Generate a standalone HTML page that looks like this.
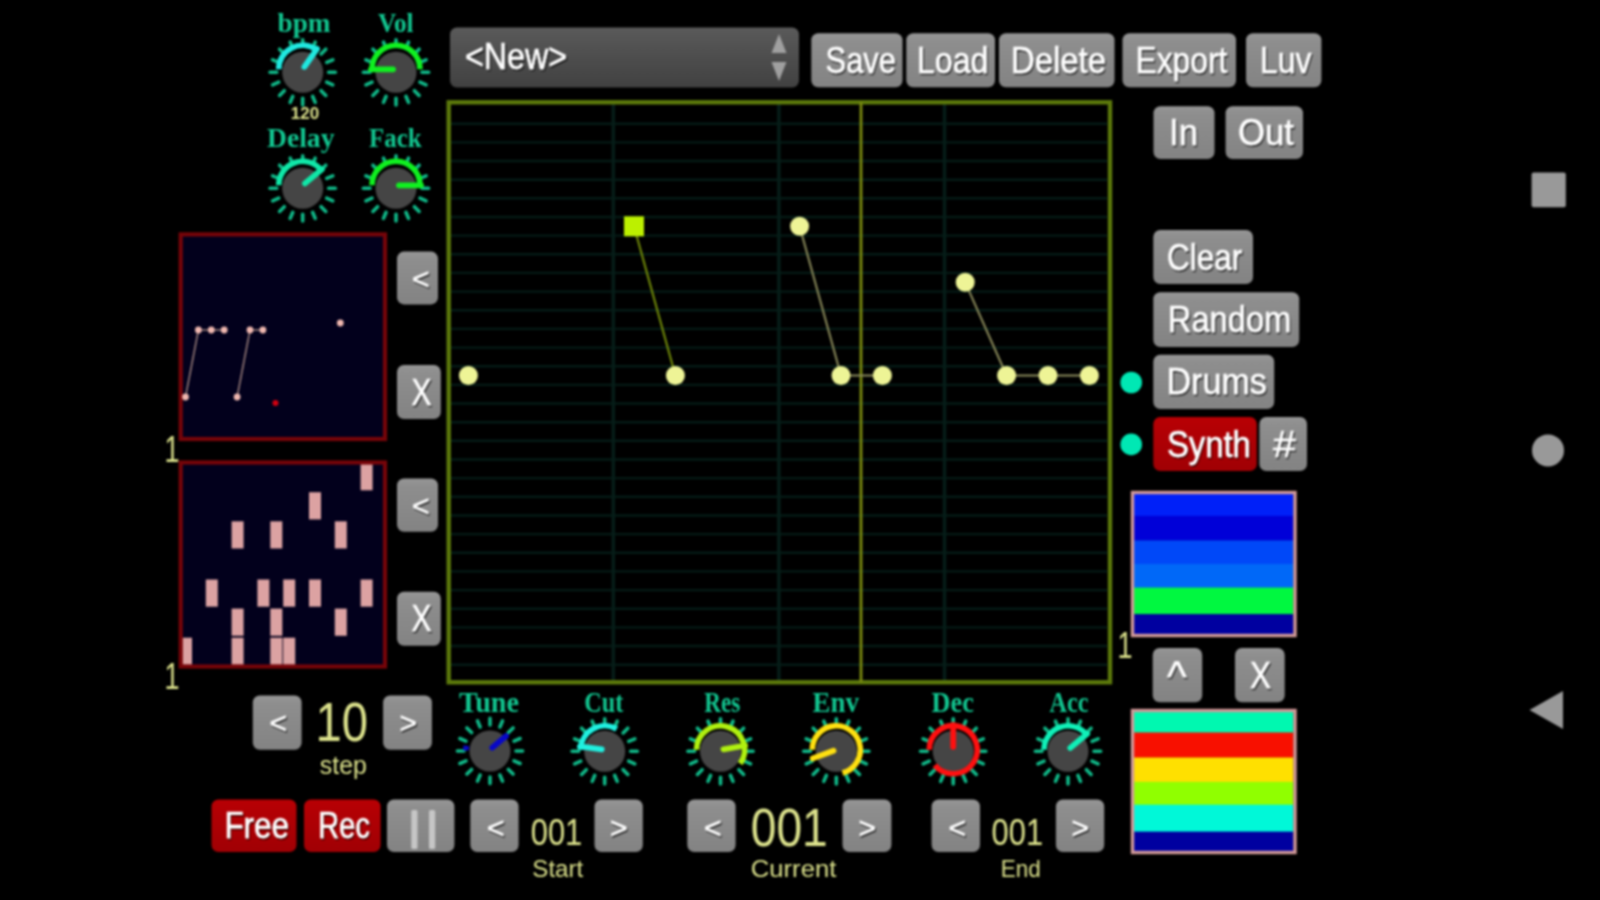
<!DOCTYPE html>
<html><head><meta charset="utf-8"><title>Synth</title>
<style>html,body{margin:0;padding:0;background:#000;width:1600px;height:900px;overflow:hidden}svg{display:block;filter:blur(1.1px)}</style>
</head><body>
<svg width="1600" height="900" viewBox="0 0 1600 900">
<defs>
<linearGradient id="gb" x1="0" y1="0" x2="0" y2="1"><stop offset="0" stop-color="#969696"/><stop offset="0.15" stop-color="#8e8e8e"/><stop offset="1" stop-color="#838383"/></linearGradient>
<linearGradient id="gr" x1="0" y1="0" x2="0" y2="1"><stop offset="0" stop-color="#b80004"/><stop offset="1" stop-color="#a00004"/></linearGradient>
<linearGradient id="gd" x1="0" y1="0" x2="0" y2="1"><stop offset="0" stop-color="#5a5a5a"/><stop offset="1" stop-color="#414141"/></linearGradient>
<filter id="shg" x="-20%" y="-20%" width="140%" height="150%"><feDropShadow dx="1.2" dy="1.8" stdDeviation="0.7" flood-color="#2c2c2c" flood-opacity="0.9"/></filter>
<filter id="shr" x="-20%" y="-20%" width="140%" height="150%"><feDropShadow dx="1.2" dy="1.8" stdDeviation="0.7" flood-color="#480000" flood-opacity="0.9"/></filter>
<filter id="shd" x="-20%" y="-20%" width="140%" height="150%"><feDropShadow dx="1.5" dy="2" stdDeviation="0.6" flood-color="#1c1c1c" flood-opacity="0.9"/></filter>
</defs>
<rect width="1600" height="900" fill="#000"/>

<rect x="450" y="27.5" width="349" height="60" rx="7" fill="url(#gd)"/>
<text x="465.0" y="68.5" font-size="36" font-family="Liberation Sans, sans-serif" text-anchor="start" fill="#fff" textLength="102.0" lengthAdjust="spacingAndGlyphs" stroke="#fff" stroke-width="0.4" filter="url(#shd)">&lt;New&gt;</text>
<path d="M779,34 L786.5,53 L771.5,53 Z" fill="#a0a0a0"/><path d="M771.5,62 L786.5,62 L779,81 Z" fill="#a0a0a0"/>
<rect x="811.3" y="33.3" width="91.2" height="54.0" rx="7" fill="url(#gb)"/>
<text x="825.6" y="72.8" font-size="36" font-family="Liberation Sans, sans-serif" text-anchor="start" fill="#fff" textLength="70.4" lengthAdjust="spacingAndGlyphs" stroke="#fff" stroke-width="0.5" filter="url(#shg)">Save</text>
<rect x="906.3" y="33.3" width="88.7" height="54.0" rx="7" fill="url(#gb)"/>
<text x="917.0" y="72.8" font-size="36" font-family="Liberation Sans, sans-serif" text-anchor="start" fill="#fff" textLength="71.5" lengthAdjust="spacingAndGlyphs" stroke="#fff" stroke-width="0.5" filter="url(#shg)">Load</text>
<rect x="999.0" y="33.3" width="115.5" height="54.0" rx="7" fill="url(#gb)"/>
<text x="1011.0" y="72.8" font-size="36" font-family="Liberation Sans, sans-serif" text-anchor="start" fill="#fff" textLength="95.0" lengthAdjust="spacingAndGlyphs" stroke="#fff" stroke-width="0.5" filter="url(#shg)">Delete</text>
<rect x="1122.5" y="33.3" width="113.5" height="54.0" rx="7" fill="url(#gb)"/>
<text x="1135.5" y="72.8" font-size="36" font-family="Liberation Sans, sans-serif" text-anchor="start" fill="#fff" textLength="91.9" lengthAdjust="spacingAndGlyphs" stroke="#fff" stroke-width="0.5" filter="url(#shg)">Export</text>
<rect x="1246.0" y="33.3" width="75.4" height="54.0" rx="7" fill="url(#gb)"/>
<text x="1260.0" y="72.8" font-size="36" font-family="Liberation Sans, sans-serif" text-anchor="start" fill="#fff" textLength="51.5" lengthAdjust="spacingAndGlyphs" stroke="#fff" stroke-width="0.5" filter="url(#shg)">Luv</text>
<rect x="1153.5" y="106.3" width="61.0" height="52.7" rx="7" fill="url(#gb)"/>
<text x="1169.0" y="145.2" font-size="36" font-family="Liberation Sans, sans-serif" text-anchor="start" fill="#fff" textLength="29.0" lengthAdjust="spacingAndGlyphs" stroke="#fff" stroke-width="0.5" filter="url(#shg)">In</text>
<rect x="1225.6" y="106.3" width="77.4" height="52.7" rx="7" fill="url(#gb)"/>
<text x="1238.0" y="145.2" font-size="36" font-family="Liberation Sans, sans-serif" text-anchor="start" fill="#fff" textLength="56.0" lengthAdjust="spacingAndGlyphs" stroke="#fff" stroke-width="0.5" filter="url(#shg)">Out</text>
<rect x="1153.3" y="230.0" width="99.7" height="54.0" rx="7" fill="url(#gb)"/>
<text x="1167.0" y="269.5" font-size="36" font-family="Liberation Sans, sans-serif" text-anchor="start" fill="#fff" textLength="75.2" lengthAdjust="spacingAndGlyphs" stroke="#fff" stroke-width="0.5" filter="url(#shg)">Clear</text>
<rect x="1153.3" y="292.3" width="145.9" height="54.7" rx="7" fill="url(#gb)"/>
<text x="1167.8" y="332.1" font-size="36" font-family="Liberation Sans, sans-serif" text-anchor="start" fill="#fff" textLength="123.5" lengthAdjust="spacingAndGlyphs" stroke="#fff" stroke-width="0.5" filter="url(#shg)">Random</text>
<rect x="1153.3" y="354.7" width="120.9" height="54.3" rx="7" fill="url(#gb)"/>
<text x="1166.5" y="394.4" font-size="36" font-family="Liberation Sans, sans-serif" text-anchor="start" fill="#fff" textLength="100.3" lengthAdjust="spacingAndGlyphs" stroke="#fff" stroke-width="0.5" filter="url(#shg)">Drums</text>
<rect x="1153.3" y="417.0" width="103.5" height="54.0" rx="7" fill="url(#gr)"/>
<text x="1167.0" y="456.5" font-size="36" font-family="Liberation Sans, sans-serif" text-anchor="start" fill="#fff" textLength="83.8" lengthAdjust="spacingAndGlyphs" stroke="#fff" stroke-width="0.5" filter="url(#shr)">Synth</text>
<rect x="1259.4" y="417.0" width="47.6" height="54.0" rx="7" fill="url(#gb)"/>
<text x="1273.0" y="456.5" font-size="36" font-family="Liberation Sans, sans-serif" text-anchor="start" fill="#fff" textLength="23.0" lengthAdjust="spacingAndGlyphs" stroke="#fff" stroke-width="0.5" filter="url(#shg)">#</text>
<circle cx="1131.2" cy="382.5" r="10.8" fill="#00e8b4"/>
<circle cx="1131.2" cy="444.4" r="10.8" fill="#00e8b4"/>
<line x1="328.7" y1="72.3" x2="335.3" y2="72.3" stroke="#10b888" stroke-width="3.6" stroke-linecap="round"/>
<line x1="326.7" y1="82.2" x2="332.8" y2="84.8" stroke="#10b888" stroke-width="3.6" stroke-linecap="round"/>
<line x1="321.1" y1="90.7" x2="325.8" y2="95.4" stroke="#10b888" stroke-width="3.6" stroke-linecap="round"/>
<line x1="312.6" y1="96.3" x2="315.2" y2="102.4" stroke="#10b888" stroke-width="3.6" stroke-linecap="round"/>
<line x1="302.7" y1="98.3" x2="302.7" y2="104.9" stroke="#10b888" stroke-width="3.6" stroke-linecap="round"/>
<line x1="292.8" y1="96.3" x2="290.2" y2="102.4" stroke="#10b888" stroke-width="3.6" stroke-linecap="round"/>
<line x1="284.3" y1="90.7" x2="279.6" y2="95.4" stroke="#10b888" stroke-width="3.6" stroke-linecap="round"/>
<line x1="278.7" y1="82.2" x2="272.6" y2="84.8" stroke="#10b888" stroke-width="3.6" stroke-linecap="round"/>
<line x1="276.7" y1="72.3" x2="270.1" y2="72.3" stroke="#10b888" stroke-width="3.6" stroke-linecap="round"/>
<line x1="278.7" y1="62.4" x2="272.6" y2="59.8" stroke="#10b888" stroke-width="3.6" stroke-linecap="round"/>
<line x1="284.3" y1="53.9" x2="279.6" y2="49.2" stroke="#10b888" stroke-width="3.6" stroke-linecap="round"/>
<line x1="292.8" y1="48.3" x2="290.2" y2="42.2" stroke="#10b888" stroke-width="3.6" stroke-linecap="round"/>
<line x1="302.7" y1="46.3" x2="302.7" y2="39.7" stroke="#10b888" stroke-width="3.6" stroke-linecap="round"/>
<line x1="312.6" y1="48.3" x2="315.2" y2="42.2" stroke="#10b888" stroke-width="3.6" stroke-linecap="round"/>
<line x1="321.1" y1="53.9" x2="325.8" y2="49.2" stroke="#10b888" stroke-width="3.6" stroke-linecap="round"/>
<line x1="326.7" y1="62.4" x2="332.8" y2="59.8" stroke="#10b888" stroke-width="3.6" stroke-linecap="round"/>
<circle cx="302.7" cy="72.3" r="20.5" fill="#454545"/>
<path d="M278.7,69.3 A24,24 0 0 1 316.5,49.6" fill="none" stroke="#20e8e0" stroke-width="5.6" stroke-linecap="butt"/>
<line x1="304.4" y1="66.8" x2="317.0" y2="48.8" stroke="#20e8e0" stroke-width="5.8" stroke-linecap="round"/>
<text x="277.5" y="31.5" font-size="28" font-family="Liberation Serif, serif" text-anchor="start" fill="#12c690" textLength="53.0" lengthAdjust="spacingAndGlyphs" font-weight="bold">bpm</text>
<line x1="422.0" y1="72.3" x2="428.6" y2="72.3" stroke="#10b888" stroke-width="3.6" stroke-linecap="round"/>
<line x1="420.0" y1="82.2" x2="426.1" y2="84.8" stroke="#10b888" stroke-width="3.6" stroke-linecap="round"/>
<line x1="414.4" y1="90.7" x2="419.1" y2="95.4" stroke="#10b888" stroke-width="3.6" stroke-linecap="round"/>
<line x1="405.9" y1="96.3" x2="408.5" y2="102.4" stroke="#10b888" stroke-width="3.6" stroke-linecap="round"/>
<line x1="396.0" y1="98.3" x2="396.0" y2="104.9" stroke="#10b888" stroke-width="3.6" stroke-linecap="round"/>
<line x1="386.1" y1="96.3" x2="383.5" y2="102.4" stroke="#10b888" stroke-width="3.6" stroke-linecap="round"/>
<line x1="377.6" y1="90.7" x2="372.9" y2="95.4" stroke="#10b888" stroke-width="3.6" stroke-linecap="round"/>
<line x1="372.0" y1="82.2" x2="365.9" y2="84.8" stroke="#10b888" stroke-width="3.6" stroke-linecap="round"/>
<line x1="370.0" y1="72.3" x2="363.4" y2="72.3" stroke="#10b888" stroke-width="3.6" stroke-linecap="round"/>
<line x1="372.0" y1="62.4" x2="365.9" y2="59.8" stroke="#10b888" stroke-width="3.6" stroke-linecap="round"/>
<line x1="377.6" y1="53.9" x2="372.9" y2="49.2" stroke="#10b888" stroke-width="3.6" stroke-linecap="round"/>
<line x1="386.1" y1="48.3" x2="383.5" y2="42.2" stroke="#10b888" stroke-width="3.6" stroke-linecap="round"/>
<line x1="396.0" y1="46.3" x2="396.0" y2="39.7" stroke="#10b888" stroke-width="3.6" stroke-linecap="round"/>
<line x1="405.9" y1="48.3" x2="408.5" y2="42.2" stroke="#10b888" stroke-width="3.6" stroke-linecap="round"/>
<line x1="414.4" y1="53.9" x2="419.1" y2="49.2" stroke="#10b888" stroke-width="3.6" stroke-linecap="round"/>
<line x1="420.0" y1="62.4" x2="426.1" y2="59.8" stroke="#10b888" stroke-width="3.6" stroke-linecap="round"/>
<circle cx="396" cy="72.3" r="20.5" fill="#454545"/>
<path d="M372.0,69.3 A24,24 0 0 1 420.0,69.3" fill="none" stroke="#10f020" stroke-width="5.6" stroke-linecap="butt"/>
<line x1="393.0" y1="69.3" x2="371.0" y2="69.3" stroke="#10f020" stroke-width="5.8" stroke-linecap="round"/>
<text x="378.0" y="31.5" font-size="28" font-family="Liberation Serif, serif" text-anchor="start" fill="#12c690" textLength="35.5" lengthAdjust="spacingAndGlyphs" font-weight="bold">Vol</text>
<line x1="328.7" y1="188.3" x2="335.3" y2="188.3" stroke="#10b888" stroke-width="3.6" stroke-linecap="round"/>
<line x1="326.7" y1="198.2" x2="332.8" y2="200.8" stroke="#10b888" stroke-width="3.6" stroke-linecap="round"/>
<line x1="321.1" y1="206.7" x2="325.8" y2="211.4" stroke="#10b888" stroke-width="3.6" stroke-linecap="round"/>
<line x1="312.6" y1="212.3" x2="315.2" y2="218.4" stroke="#10b888" stroke-width="3.6" stroke-linecap="round"/>
<line x1="302.7" y1="214.3" x2="302.7" y2="220.9" stroke="#10b888" stroke-width="3.6" stroke-linecap="round"/>
<line x1="292.8" y1="212.3" x2="290.2" y2="218.4" stroke="#10b888" stroke-width="3.6" stroke-linecap="round"/>
<line x1="284.3" y1="206.7" x2="279.6" y2="211.4" stroke="#10b888" stroke-width="3.6" stroke-linecap="round"/>
<line x1="278.7" y1="198.2" x2="272.6" y2="200.8" stroke="#10b888" stroke-width="3.6" stroke-linecap="round"/>
<line x1="276.7" y1="188.3" x2="270.1" y2="188.3" stroke="#10b888" stroke-width="3.6" stroke-linecap="round"/>
<line x1="278.7" y1="178.4" x2="272.6" y2="175.8" stroke="#10b888" stroke-width="3.6" stroke-linecap="round"/>
<line x1="284.3" y1="169.9" x2="279.6" y2="165.2" stroke="#10b888" stroke-width="3.6" stroke-linecap="round"/>
<line x1="292.8" y1="164.3" x2="290.2" y2="158.2" stroke="#10b888" stroke-width="3.6" stroke-linecap="round"/>
<line x1="302.7" y1="162.3" x2="302.7" y2="155.7" stroke="#10b888" stroke-width="3.6" stroke-linecap="round"/>
<line x1="312.6" y1="164.3" x2="315.2" y2="158.2" stroke="#10b888" stroke-width="3.6" stroke-linecap="round"/>
<line x1="321.1" y1="169.9" x2="325.8" y2="165.2" stroke="#10b888" stroke-width="3.6" stroke-linecap="round"/>
<line x1="326.7" y1="178.4" x2="332.8" y2="175.8" stroke="#10b888" stroke-width="3.6" stroke-linecap="round"/>
<circle cx="302.7" cy="188.3" r="20.5" fill="#454545"/>
<path d="M278.7,185.3 A24,24 0 0 1 321.1,169.9" fill="none" stroke="#10e8a8" stroke-width="5.6" stroke-linecap="butt"/>
<line x1="305.0" y1="183.4" x2="321.9" y2="169.2" stroke="#10e8a8" stroke-width="5.8" stroke-linecap="round"/>
<text x="267.0" y="147.0" font-size="28" font-family="Liberation Serif, serif" text-anchor="start" fill="#12c690" textLength="67.5" lengthAdjust="spacingAndGlyphs" font-weight="bold">Delay</text>
<line x1="422.0" y1="188.3" x2="428.6" y2="188.3" stroke="#10b888" stroke-width="3.6" stroke-linecap="round"/>
<line x1="420.0" y1="198.2" x2="426.1" y2="200.8" stroke="#10b888" stroke-width="3.6" stroke-linecap="round"/>
<line x1="414.4" y1="206.7" x2="419.1" y2="211.4" stroke="#10b888" stroke-width="3.6" stroke-linecap="round"/>
<line x1="405.9" y1="212.3" x2="408.5" y2="218.4" stroke="#10b888" stroke-width="3.6" stroke-linecap="round"/>
<line x1="396.0" y1="214.3" x2="396.0" y2="220.9" stroke="#10b888" stroke-width="3.6" stroke-linecap="round"/>
<line x1="386.1" y1="212.3" x2="383.5" y2="218.4" stroke="#10b888" stroke-width="3.6" stroke-linecap="round"/>
<line x1="377.6" y1="206.7" x2="372.9" y2="211.4" stroke="#10b888" stroke-width="3.6" stroke-linecap="round"/>
<line x1="372.0" y1="198.2" x2="365.9" y2="200.8" stroke="#10b888" stroke-width="3.6" stroke-linecap="round"/>
<line x1="370.0" y1="188.3" x2="363.4" y2="188.3" stroke="#10b888" stroke-width="3.6" stroke-linecap="round"/>
<line x1="372.0" y1="178.4" x2="365.9" y2="175.8" stroke="#10b888" stroke-width="3.6" stroke-linecap="round"/>
<line x1="377.6" y1="169.9" x2="372.9" y2="165.2" stroke="#10b888" stroke-width="3.6" stroke-linecap="round"/>
<line x1="386.1" y1="164.3" x2="383.5" y2="158.2" stroke="#10b888" stroke-width="3.6" stroke-linecap="round"/>
<line x1="396.0" y1="162.3" x2="396.0" y2="155.7" stroke="#10b888" stroke-width="3.6" stroke-linecap="round"/>
<line x1="405.9" y1="164.3" x2="408.5" y2="158.2" stroke="#10b888" stroke-width="3.6" stroke-linecap="round"/>
<line x1="414.4" y1="169.9" x2="419.1" y2="165.2" stroke="#10b888" stroke-width="3.6" stroke-linecap="round"/>
<line x1="420.0" y1="178.4" x2="426.1" y2="175.8" stroke="#10b888" stroke-width="3.6" stroke-linecap="round"/>
<circle cx="396" cy="188.3" r="20.5" fill="#454545"/>
<path d="M372.0,185.3 A24,24 0 0 1 420.0,185.3" fill="none" stroke="#10f020" stroke-width="5.6" stroke-linecap="butt"/>
<line x1="399.0" y1="185.3" x2="421.0" y2="185.3" stroke="#10f020" stroke-width="5.8" stroke-linecap="round"/>
<text x="369.0" y="147.0" font-size="28" font-family="Liberation Serif, serif" text-anchor="start" fill="#12c690" textLength="52.5" lengthAdjust="spacingAndGlyphs" font-weight="bold">Fack</text>
<text x="305.0" y="119.0" font-size="17" font-family="Liberation Sans, sans-serif" text-anchor="middle" fill="#dce28c" font-weight="bold">120</text>
<line x1="516.0" y1="751.0" x2="522.6" y2="751.0" stroke="#10b888" stroke-width="3.6" stroke-linecap="round"/>
<line x1="514.0" y1="760.9" x2="520.1" y2="763.5" stroke="#10b888" stroke-width="3.6" stroke-linecap="round"/>
<line x1="508.4" y1="769.4" x2="513.1" y2="774.1" stroke="#10b888" stroke-width="3.6" stroke-linecap="round"/>
<line x1="499.9" y1="775.0" x2="502.5" y2="781.1" stroke="#10b888" stroke-width="3.6" stroke-linecap="round"/>
<line x1="490.0" y1="777.0" x2="490.0" y2="783.6" stroke="#10b888" stroke-width="3.6" stroke-linecap="round"/>
<line x1="480.1" y1="775.0" x2="477.5" y2="781.1" stroke="#10b888" stroke-width="3.6" stroke-linecap="round"/>
<line x1="471.6" y1="769.4" x2="466.9" y2="774.1" stroke="#10b888" stroke-width="3.6" stroke-linecap="round"/>
<line x1="466.0" y1="760.9" x2="459.9" y2="763.5" stroke="#10b888" stroke-width="3.6" stroke-linecap="round"/>
<line x1="464.0" y1="751.0" x2="457.4" y2="751.0" stroke="#10b888" stroke-width="3.6" stroke-linecap="round"/>
<line x1="466.0" y1="741.1" x2="459.9" y2="738.5" stroke="#10b888" stroke-width="3.6" stroke-linecap="round"/>
<line x1="471.6" y1="732.6" x2="466.9" y2="727.9" stroke="#10b888" stroke-width="3.6" stroke-linecap="round"/>
<line x1="480.1" y1="727.0" x2="477.5" y2="720.9" stroke="#10b888" stroke-width="3.6" stroke-linecap="round"/>
<line x1="490.0" y1="725.0" x2="490.0" y2="718.4" stroke="#10b888" stroke-width="3.6" stroke-linecap="round"/>
<line x1="499.9" y1="727.0" x2="502.5" y2="720.9" stroke="#10b888" stroke-width="3.6" stroke-linecap="round"/>
<line x1="508.4" y1="732.6" x2="513.1" y2="727.9" stroke="#10b888" stroke-width="3.6" stroke-linecap="round"/>
<line x1="514.0" y1="741.1" x2="520.1" y2="738.5" stroke="#10b888" stroke-width="3.6" stroke-linecap="round"/>
<circle cx="490" cy="751" r="20.5" fill="#454545"/>
<path d="M466.0,750.3 A24,24 0 0 1 466.3,745.7" fill="none" stroke="#0808c8" stroke-width="5.6" stroke-linecap="butt"/>
<line x1="492.3" y1="747.6" x2="506.1" y2="736.0" stroke="#0808c8" stroke-width="5.8" stroke-linecap="round"/>
<text x="459.0" y="712.3" font-size="30" font-family="Liberation Serif, serif" text-anchor="start" fill="#12c690" textLength="60.0" lengthAdjust="spacingAndGlyphs" font-weight="bold">Tune</text>
<line x1="630.7" y1="751.3" x2="637.3" y2="751.3" stroke="#10b888" stroke-width="3.6" stroke-linecap="round"/>
<line x1="628.7" y1="761.2" x2="634.8" y2="763.8" stroke="#10b888" stroke-width="3.6" stroke-linecap="round"/>
<line x1="623.1" y1="769.7" x2="627.8" y2="774.4" stroke="#10b888" stroke-width="3.6" stroke-linecap="round"/>
<line x1="614.6" y1="775.3" x2="617.2" y2="781.4" stroke="#10b888" stroke-width="3.6" stroke-linecap="round"/>
<line x1="604.7" y1="777.3" x2="604.7" y2="783.9" stroke="#10b888" stroke-width="3.6" stroke-linecap="round"/>
<line x1="594.8" y1="775.3" x2="592.2" y2="781.4" stroke="#10b888" stroke-width="3.6" stroke-linecap="round"/>
<line x1="586.3" y1="769.7" x2="581.6" y2="774.4" stroke="#10b888" stroke-width="3.6" stroke-linecap="round"/>
<line x1="580.7" y1="761.2" x2="574.6" y2="763.8" stroke="#10b888" stroke-width="3.6" stroke-linecap="round"/>
<line x1="578.7" y1="751.3" x2="572.1" y2="751.3" stroke="#10b888" stroke-width="3.6" stroke-linecap="round"/>
<line x1="580.7" y1="741.4" x2="574.6" y2="738.8" stroke="#10b888" stroke-width="3.6" stroke-linecap="round"/>
<line x1="586.3" y1="732.9" x2="581.6" y2="728.2" stroke="#10b888" stroke-width="3.6" stroke-linecap="round"/>
<line x1="594.8" y1="727.3" x2="592.2" y2="721.2" stroke="#10b888" stroke-width="3.6" stroke-linecap="round"/>
<line x1="604.7" y1="725.3" x2="604.7" y2="718.7" stroke="#10b888" stroke-width="3.6" stroke-linecap="round"/>
<line x1="614.6" y1="727.3" x2="617.2" y2="721.2" stroke="#10b888" stroke-width="3.6" stroke-linecap="round"/>
<line x1="623.1" y1="732.9" x2="627.8" y2="728.2" stroke="#10b888" stroke-width="3.6" stroke-linecap="round"/>
<line x1="628.7" y1="741.4" x2="634.8" y2="738.8" stroke="#10b888" stroke-width="3.6" stroke-linecap="round"/>
<circle cx="604.7" cy="751.3" r="20.5" fill="#454545"/>
<path d="M580.7,749.8 A24,24 0 0 1 616.7,729.0" fill="none" stroke="#20f0e0" stroke-width="5.6" stroke-linecap="butt"/>
<line x1="601.7" y1="749.4" x2="579.9" y2="746.3" stroke="#20f0e0" stroke-width="5.8" stroke-linecap="round"/>
<text x="584.2" y="712.3" font-size="30" font-family="Liberation Serif, serif" text-anchor="start" fill="#12c690" textLength="39.0" lengthAdjust="spacingAndGlyphs" font-weight="bold">Cut</text>
<line x1="746.5" y1="751.3" x2="753.1" y2="751.3" stroke="#10b888" stroke-width="3.6" stroke-linecap="round"/>
<line x1="744.5" y1="761.2" x2="750.6" y2="763.8" stroke="#10b888" stroke-width="3.6" stroke-linecap="round"/>
<line x1="738.9" y1="769.7" x2="743.6" y2="774.4" stroke="#10b888" stroke-width="3.6" stroke-linecap="round"/>
<line x1="730.4" y1="775.3" x2="733.0" y2="781.4" stroke="#10b888" stroke-width="3.6" stroke-linecap="round"/>
<line x1="720.5" y1="777.3" x2="720.5" y2="783.9" stroke="#10b888" stroke-width="3.6" stroke-linecap="round"/>
<line x1="710.6" y1="775.3" x2="708.0" y2="781.4" stroke="#10b888" stroke-width="3.6" stroke-linecap="round"/>
<line x1="702.1" y1="769.7" x2="697.4" y2="774.4" stroke="#10b888" stroke-width="3.6" stroke-linecap="round"/>
<line x1="696.5" y1="761.2" x2="690.4" y2="763.8" stroke="#10b888" stroke-width="3.6" stroke-linecap="round"/>
<line x1="694.5" y1="751.3" x2="687.9" y2="751.3" stroke="#10b888" stroke-width="3.6" stroke-linecap="round"/>
<line x1="696.5" y1="741.4" x2="690.4" y2="738.8" stroke="#10b888" stroke-width="3.6" stroke-linecap="round"/>
<line x1="702.1" y1="732.9" x2="697.4" y2="728.2" stroke="#10b888" stroke-width="3.6" stroke-linecap="round"/>
<line x1="710.6" y1="727.3" x2="708.0" y2="721.2" stroke="#10b888" stroke-width="3.6" stroke-linecap="round"/>
<line x1="720.5" y1="725.3" x2="720.5" y2="718.7" stroke="#10b888" stroke-width="3.6" stroke-linecap="round"/>
<line x1="730.4" y1="727.3" x2="733.0" y2="721.2" stroke="#10b888" stroke-width="3.6" stroke-linecap="round"/>
<line x1="738.9" y1="732.9" x2="743.6" y2="728.2" stroke="#10b888" stroke-width="3.6" stroke-linecap="round"/>
<line x1="744.5" y1="741.4" x2="750.6" y2="738.8" stroke="#10b888" stroke-width="3.6" stroke-linecap="round"/>
<circle cx="720.5" cy="751.3" r="20.5" fill="#454545"/>
<path d="M696.5,749.8 A24,24 0 1 1 740.2,763.6" fill="none" stroke="#b0f010" stroke-width="5.6" stroke-linecap="butt"/>
<line x1="723.5" y1="749.3" x2="745.1" y2="745.5" stroke="#b0f010" stroke-width="5.8" stroke-linecap="round"/>
<text x="704.2" y="712.3" font-size="30" font-family="Liberation Serif, serif" text-anchor="start" fill="#12c690" textLength="36.0" lengthAdjust="spacingAndGlyphs" font-weight="bold">Res</text>
<line x1="862.3" y1="751.3" x2="868.9" y2="751.3" stroke="#10b888" stroke-width="3.6" stroke-linecap="round"/>
<line x1="860.3" y1="761.2" x2="866.4" y2="763.8" stroke="#10b888" stroke-width="3.6" stroke-linecap="round"/>
<line x1="854.7" y1="769.7" x2="859.4" y2="774.4" stroke="#10b888" stroke-width="3.6" stroke-linecap="round"/>
<line x1="846.2" y1="775.3" x2="848.8" y2="781.4" stroke="#10b888" stroke-width="3.6" stroke-linecap="round"/>
<line x1="836.3" y1="777.3" x2="836.3" y2="783.9" stroke="#10b888" stroke-width="3.6" stroke-linecap="round"/>
<line x1="826.4" y1="775.3" x2="823.8" y2="781.4" stroke="#10b888" stroke-width="3.6" stroke-linecap="round"/>
<line x1="817.9" y1="769.7" x2="813.2" y2="774.4" stroke="#10b888" stroke-width="3.6" stroke-linecap="round"/>
<line x1="812.3" y1="761.2" x2="806.2" y2="763.8" stroke="#10b888" stroke-width="3.6" stroke-linecap="round"/>
<line x1="810.3" y1="751.3" x2="803.7" y2="751.3" stroke="#10b888" stroke-width="3.6" stroke-linecap="round"/>
<line x1="812.3" y1="741.4" x2="806.2" y2="738.8" stroke="#10b888" stroke-width="3.6" stroke-linecap="round"/>
<line x1="817.9" y1="732.9" x2="813.2" y2="728.2" stroke="#10b888" stroke-width="3.6" stroke-linecap="round"/>
<line x1="826.4" y1="727.3" x2="823.8" y2="721.2" stroke="#10b888" stroke-width="3.6" stroke-linecap="round"/>
<line x1="836.3" y1="725.3" x2="836.3" y2="718.7" stroke="#10b888" stroke-width="3.6" stroke-linecap="round"/>
<line x1="846.2" y1="727.3" x2="848.8" y2="721.2" stroke="#10b888" stroke-width="3.6" stroke-linecap="round"/>
<line x1="854.7" y1="732.9" x2="859.4" y2="728.2" stroke="#10b888" stroke-width="3.6" stroke-linecap="round"/>
<line x1="860.3" y1="741.4" x2="866.4" y2="738.8" stroke="#10b888" stroke-width="3.6" stroke-linecap="round"/>
<circle cx="836.3" cy="751.3" r="20.5" fill="#454545"/>
<path d="M812.3,749.8 A24,24 0 1 1 842.5,773.0" fill="none" stroke="#ffe010" stroke-width="5.6" stroke-linecap="butt"/>
<line x1="833.5" y1="750.8" x2="812.8" y2="758.4" stroke="#ffe010" stroke-width="5.8" stroke-linecap="round"/>
<text x="812.6" y="712.3" font-size="30" font-family="Liberation Serif, serif" text-anchor="start" fill="#12c690" textLength="46.4" lengthAdjust="spacingAndGlyphs" font-weight="bold">Env</text>
<line x1="979.2" y1="751.3" x2="985.8" y2="751.3" stroke="#10b888" stroke-width="3.6" stroke-linecap="round"/>
<line x1="977.2" y1="761.2" x2="983.3" y2="763.8" stroke="#10b888" stroke-width="3.6" stroke-linecap="round"/>
<line x1="971.6" y1="769.7" x2="976.3" y2="774.4" stroke="#10b888" stroke-width="3.6" stroke-linecap="round"/>
<line x1="963.1" y1="775.3" x2="965.7" y2="781.4" stroke="#10b888" stroke-width="3.6" stroke-linecap="round"/>
<line x1="953.2" y1="777.3" x2="953.2" y2="783.9" stroke="#10b888" stroke-width="3.6" stroke-linecap="round"/>
<line x1="943.3" y1="775.3" x2="940.7" y2="781.4" stroke="#10b888" stroke-width="3.6" stroke-linecap="round"/>
<line x1="934.8" y1="769.7" x2="930.1" y2="774.4" stroke="#10b888" stroke-width="3.6" stroke-linecap="round"/>
<line x1="929.2" y1="761.2" x2="923.1" y2="763.8" stroke="#10b888" stroke-width="3.6" stroke-linecap="round"/>
<line x1="927.2" y1="751.3" x2="920.6" y2="751.3" stroke="#10b888" stroke-width="3.6" stroke-linecap="round"/>
<line x1="929.2" y1="741.4" x2="923.1" y2="738.8" stroke="#10b888" stroke-width="3.6" stroke-linecap="round"/>
<line x1="934.8" y1="732.9" x2="930.1" y2="728.2" stroke="#10b888" stroke-width="3.6" stroke-linecap="round"/>
<line x1="943.3" y1="727.3" x2="940.7" y2="721.2" stroke="#10b888" stroke-width="3.6" stroke-linecap="round"/>
<line x1="953.2" y1="725.3" x2="953.2" y2="718.7" stroke="#10b888" stroke-width="3.6" stroke-linecap="round"/>
<line x1="963.1" y1="727.3" x2="965.7" y2="721.2" stroke="#10b888" stroke-width="3.6" stroke-linecap="round"/>
<line x1="971.6" y1="732.9" x2="976.3" y2="728.2" stroke="#10b888" stroke-width="3.6" stroke-linecap="round"/>
<line x1="977.2" y1="741.4" x2="983.3" y2="738.8" stroke="#10b888" stroke-width="3.6" stroke-linecap="round"/>
<circle cx="953.2" cy="751.3" r="20.5" fill="#454545"/>
<path d="M929.2,749.8 A24,24 0 1 1 934.8,765.2" fill="none" stroke="#ff1010" stroke-width="5.6" stroke-linecap="butt"/>
<line x1="953.2" y1="746.8" x2="953.2" y2="724.8" stroke="#ff1010" stroke-width="5.8" stroke-linecap="round"/>
<text x="931.6" y="712.3" font-size="30" font-family="Liberation Serif, serif" text-anchor="start" fill="#12c690" textLength="42.2" lengthAdjust="spacingAndGlyphs" font-weight="bold">Dec</text>
<line x1="1094.0" y1="751.3" x2="1100.6" y2="751.3" stroke="#10b888" stroke-width="3.6" stroke-linecap="round"/>
<line x1="1092.0" y1="761.2" x2="1098.1" y2="763.8" stroke="#10b888" stroke-width="3.6" stroke-linecap="round"/>
<line x1="1086.4" y1="769.7" x2="1091.1" y2="774.4" stroke="#10b888" stroke-width="3.6" stroke-linecap="round"/>
<line x1="1077.9" y1="775.3" x2="1080.5" y2="781.4" stroke="#10b888" stroke-width="3.6" stroke-linecap="round"/>
<line x1="1068.0" y1="777.3" x2="1068.0" y2="783.9" stroke="#10b888" stroke-width="3.6" stroke-linecap="round"/>
<line x1="1058.1" y1="775.3" x2="1055.5" y2="781.4" stroke="#10b888" stroke-width="3.6" stroke-linecap="round"/>
<line x1="1049.6" y1="769.7" x2="1044.9" y2="774.4" stroke="#10b888" stroke-width="3.6" stroke-linecap="round"/>
<line x1="1044.0" y1="761.2" x2="1037.9" y2="763.8" stroke="#10b888" stroke-width="3.6" stroke-linecap="round"/>
<line x1="1042.0" y1="751.3" x2="1035.4" y2="751.3" stroke="#10b888" stroke-width="3.6" stroke-linecap="round"/>
<line x1="1044.0" y1="741.4" x2="1037.9" y2="738.8" stroke="#10b888" stroke-width="3.6" stroke-linecap="round"/>
<line x1="1049.6" y1="732.9" x2="1044.9" y2="728.2" stroke="#10b888" stroke-width="3.6" stroke-linecap="round"/>
<line x1="1058.1" y1="727.3" x2="1055.5" y2="721.2" stroke="#10b888" stroke-width="3.6" stroke-linecap="round"/>
<line x1="1068.0" y1="725.3" x2="1068.0" y2="718.7" stroke="#10b888" stroke-width="3.6" stroke-linecap="round"/>
<line x1="1077.9" y1="727.3" x2="1080.5" y2="721.2" stroke="#10b888" stroke-width="3.6" stroke-linecap="round"/>
<line x1="1086.4" y1="732.9" x2="1091.1" y2="728.2" stroke="#10b888" stroke-width="3.6" stroke-linecap="round"/>
<line x1="1092.0" y1="741.4" x2="1098.1" y2="738.8" stroke="#10b888" stroke-width="3.6" stroke-linecap="round"/>
<circle cx="1068" cy="751.3" r="20.5" fill="#454545"/>
<path d="M1044.0,749.8 A24,24 0 0 1 1086.4,734.4" fill="none" stroke="#10f0b8" stroke-width="5.6" stroke-linecap="butt"/>
<line x1="1070.3" y1="747.9" x2="1087.2" y2="733.7" stroke="#10f0b8" stroke-width="5.8" stroke-linecap="round"/>
<text x="1049.5" y="712.3" font-size="30" font-family="Liberation Serif, serif" text-anchor="start" fill="#12c690" textLength="39.1" lengthAdjust="spacingAndGlyphs" font-weight="bold">Acc</text>
<line x1="450.7" y1="123.7" x2="1107" y2="123.7" stroke="#051b16" stroke-width="2.4"/>
<line x1="450.7" y1="142.4" x2="1107" y2="142.4" stroke="#051b16" stroke-width="2.4"/>
<line x1="450.7" y1="161.0" x2="1107" y2="161.0" stroke="#051b16" stroke-width="2.4"/>
<line x1="450.7" y1="179.7" x2="1107" y2="179.7" stroke="#051b16" stroke-width="2.4"/>
<line x1="450.7" y1="198.3" x2="1107" y2="198.3" stroke="#051b16" stroke-width="2.4"/>
<line x1="450.7" y1="217.0" x2="1107" y2="217.0" stroke="#051b16" stroke-width="2.4"/>
<line x1="450.7" y1="235.6" x2="1107" y2="235.6" stroke="#051b16" stroke-width="2.4"/>
<line x1="450.7" y1="254.3" x2="1107" y2="254.3" stroke="#051b16" stroke-width="2.4"/>
<line x1="450.7" y1="272.9" x2="1107" y2="272.9" stroke="#051b16" stroke-width="2.4"/>
<line x1="450.7" y1="291.6" x2="1107" y2="291.6" stroke="#051b16" stroke-width="2.4"/>
<line x1="450.7" y1="310.2" x2="1107" y2="310.2" stroke="#051b16" stroke-width="2.4"/>
<line x1="450.7" y1="328.9" x2="1107" y2="328.9" stroke="#051b16" stroke-width="2.4"/>
<line x1="450.7" y1="347.6" x2="1107" y2="347.6" stroke="#051b16" stroke-width="2.4"/>
<line x1="450.7" y1="366.2" x2="1107" y2="366.2" stroke="#051b16" stroke-width="2.4"/>
<line x1="450.7" y1="384.9" x2="1107" y2="384.9" stroke="#051b16" stroke-width="2.4"/>
<line x1="450.7" y1="403.5" x2="1107" y2="403.5" stroke="#051b16" stroke-width="2.4"/>
<line x1="450.7" y1="422.2" x2="1107" y2="422.2" stroke="#051b16" stroke-width="2.4"/>
<line x1="450.7" y1="440.8" x2="1107" y2="440.8" stroke="#051b16" stroke-width="2.4"/>
<line x1="450.7" y1="459.5" x2="1107" y2="459.5" stroke="#051b16" stroke-width="2.4"/>
<line x1="450.7" y1="478.1" x2="1107" y2="478.1" stroke="#051b16" stroke-width="2.4"/>
<line x1="450.7" y1="496.8" x2="1107" y2="496.8" stroke="#051b16" stroke-width="2.4"/>
<line x1="450.7" y1="515.5" x2="1107" y2="515.5" stroke="#051b16" stroke-width="2.4"/>
<line x1="450.7" y1="534.1" x2="1107" y2="534.1" stroke="#051b16" stroke-width="2.4"/>
<line x1="450.7" y1="552.8" x2="1107" y2="552.8" stroke="#051b16" stroke-width="2.4"/>
<line x1="450.7" y1="571.4" x2="1107" y2="571.4" stroke="#051b16" stroke-width="2.4"/>
<line x1="450.7" y1="590.1" x2="1107" y2="590.1" stroke="#051b16" stroke-width="2.4"/>
<line x1="450.7" y1="608.7" x2="1107" y2="608.7" stroke="#051b16" stroke-width="2.4"/>
<line x1="450.7" y1="627.4" x2="1107" y2="627.4" stroke="#051b16" stroke-width="2.4"/>
<line x1="450.7" y1="646.0" x2="1107" y2="646.0" stroke="#051b16" stroke-width="2.4"/>
<line x1="450.7" y1="664.7" x2="1107" y2="664.7" stroke="#051b16" stroke-width="2.4"/>
<line x1="613.3" y1="102.3" x2="613.3" y2="682.3" stroke="#061d18" stroke-width="3.6"/>
<line x1="778.9" y1="102.3" x2="778.9" y2="682.3" stroke="#061d18" stroke-width="3.6"/>
<line x1="944.5" y1="102.3" x2="944.5" y2="682.3" stroke="#061d18" stroke-width="3.6"/>
<rect x="448.7" y="102.3" width="661.3" height="580.0" fill="none" stroke="#5c790b" stroke-width="4.4"/>
<line x1="861" y1="102.3" x2="861" y2="682.3" stroke="#7c8c10" stroke-width="2.8"/>
<line x1="634.0" y1="226.3" x2="675.4" y2="375.5" stroke="#76900a" stroke-width="2"/>
<line x1="799.6" y1="226.3" x2="841.0" y2="375.5" stroke="#8c8c5c" stroke-width="2"/>
<line x1="841.0" y1="375.5" x2="882.4" y2="375.5" stroke="#8c8c5c" stroke-width="2"/>
<line x1="965.2" y1="282.3" x2="1006.6" y2="375.5" stroke="#8c8c5c" stroke-width="2"/>
<line x1="1006.6" y1="375.5" x2="1048.0" y2="375.5" stroke="#8c8c5c" stroke-width="2"/>
<line x1="1048.0" y1="375.5" x2="1089.4" y2="375.5" stroke="#8c8c5c" stroke-width="2"/>
<circle cx="468.4" cy="375.5" r="9.5" fill="#eef496"/>
<rect x="624.0" y="216.3" width="20" height="20" fill="#bcf000"/>
<circle cx="675.4" cy="375.5" r="9.5" fill="#eef496"/>
<circle cx="799.6" cy="226.3" r="9.5" fill="#eef496"/>
<circle cx="841.0" cy="375.5" r="9.5" fill="#eef496"/>
<circle cx="882.4" cy="375.5" r="9.5" fill="#eef496"/>
<circle cx="965.2" cy="282.3" r="9.5" fill="#eef496"/>
<circle cx="1006.6" cy="375.5" r="9.5" fill="#eef496"/>
<circle cx="1048.0" cy="375.5" r="9.5" fill="#eef496"/>
<circle cx="1089.4" cy="375.5" r="9.5" fill="#eef496"/>
<rect x="180.7" y="234.4" width="204.3" height="204.6" fill="#02001c" stroke="#760409" stroke-width="4.2"/>
<rect x="180.7" y="462.5" width="204.3" height="204" fill="#02001c"/>
<text x="164.5" y="462.0" font-size="36" font-family="Liberation Sans, sans-serif" text-anchor="start" fill="#dce28c" textLength="15.0" lengthAdjust="spacingAndGlyphs" >1</text>
<text x="164.5" y="689.0" font-size="36" font-family="Liberation Sans, sans-serif" text-anchor="start" fill="#dce28c" textLength="15.0" lengthAdjust="spacingAndGlyphs" >1</text>
<text x="1117.5" y="658.0" font-size="36" font-family="Liberation Sans, sans-serif" text-anchor="start" fill="#dce28c" textLength="15.0" lengthAdjust="spacingAndGlyphs" >1</text>
<line x1="185.5" y1="397.0" x2="198.4" y2="330.0" stroke="#a88a84" stroke-width="1.4"/>
<line x1="198.4" y1="330.0" x2="211.3" y2="330.0" stroke="#a88a84" stroke-width="1.4"/>
<line x1="211.3" y1="330.0" x2="224.2" y2="330.0" stroke="#a88a84" stroke-width="1.4"/>
<line x1="237.1" y1="397.0" x2="250.0" y2="330.0" stroke="#a88a84" stroke-width="1.4"/>
<line x1="250.0" y1="330.0" x2="262.9" y2="330.0" stroke="#a88a84" stroke-width="1.4"/>
<circle cx="185.5" cy="397.0" r="3.4" fill="#f0b8b0"/>
<circle cx="198.4" cy="330.0" r="3.4" fill="#f0b8b0"/>
<circle cx="211.3" cy="330.0" r="3.4" fill="#f0b8b0"/>
<circle cx="224.2" cy="330.0" r="3.4" fill="#f0b8b0"/>
<circle cx="237.1" cy="397.0" r="3.4" fill="#f0b8b0"/>
<circle cx="250.0" cy="330.0" r="3.4" fill="#f0b8b0"/>
<circle cx="262.9" cy="330.0" r="3.4" fill="#f0b8b0"/>
<circle cx="340.3" cy="323.0" r="3.4" fill="#f0b8b0"/>
<circle cx="275.5" cy="403" r="3" fill="#d00010"/>
<rect x="360.6" y="463.1" width="12" height="27.2" fill="#dca2a2"/>
<rect x="309.0" y="492.2" width="12" height="27.2" fill="#dca2a2"/>
<rect x="231.6" y="521.3" width="12" height="27.2" fill="#dca2a2"/>
<rect x="270.3" y="521.3" width="12" height="27.2" fill="#dca2a2"/>
<rect x="334.8" y="521.3" width="12" height="27.2" fill="#dca2a2"/>
<rect x="205.8" y="579.5" width="12" height="27.2" fill="#dca2a2"/>
<rect x="257.4" y="579.5" width="12" height="27.2" fill="#dca2a2"/>
<rect x="283.2" y="579.5" width="12" height="27.2" fill="#dca2a2"/>
<rect x="309.0" y="579.5" width="12" height="27.2" fill="#dca2a2"/>
<rect x="360.6" y="579.5" width="12" height="27.2" fill="#dca2a2"/>
<rect x="231.6" y="608.6" width="12" height="27.2" fill="#dca2a2"/>
<rect x="270.3" y="608.6" width="12" height="27.2" fill="#dca2a2"/>
<rect x="334.8" y="608.6" width="12" height="27.2" fill="#dca2a2"/>
<rect x="180.0" y="637.7" width="12" height="27.2" fill="#dca2a2"/>
<rect x="231.6" y="637.7" width="12" height="27.2" fill="#dca2a2"/>
<rect x="270.3" y="637.7" width="12" height="27.2" fill="#dca2a2"/>
<rect x="283.2" y="637.7" width="12" height="27.2" fill="#dca2a2"/>
<rect x="180.7" y="462.5" width="204.3" height="204" fill="none" stroke="#760409" stroke-width="4.2"/>
<rect x="397.0" y="251.6" width="41.0" height="52.8" rx="7" fill="url(#gb)"/>
<text x="412.0" y="289.0" font-size="30" font-family="Liberation Sans, sans-serif" text-anchor="start" fill="#fff" stroke="#fff" stroke-width="0.5" filter="url(#shg)">&lt;</text>
<rect x="397.0" y="365.0" width="43.8" height="54.0" rx="7" fill="url(#gb)"/>
<text x="411.5" y="404.5" font-size="36" font-family="Liberation Sans, sans-serif" text-anchor="start" fill="#fff" textLength="20.0" lengthAdjust="spacingAndGlyphs" stroke="#fff" stroke-width="0.5" filter="url(#shg)">X</text>
<rect x="397.0" y="478.5" width="41.0" height="53.3" rx="7" fill="url(#gb)"/>
<text x="412.0" y="516.0" font-size="30" font-family="Liberation Sans, sans-serif" text-anchor="start" fill="#fff" stroke="#fff" stroke-width="0.5" filter="url(#shg)">&lt;</text>
<rect x="397.0" y="591.8" width="43.8" height="54.0" rx="7" fill="url(#gb)"/>
<text x="411.5" y="631.3" font-size="36" font-family="Liberation Sans, sans-serif" text-anchor="start" fill="#fff" textLength="20.0" lengthAdjust="spacingAndGlyphs" stroke="#fff" stroke-width="0.5" filter="url(#shg)">X</text>
<rect x="252.8" y="695.5" width="48.8" height="54.2" rx="7" fill="url(#gb)"/>
<text x="269.5" y="733.0" font-size="30" font-family="Liberation Sans, sans-serif" text-anchor="start" fill="#fff" stroke="#fff" stroke-width="0.5" filter="url(#shg)">&lt;</text>
<rect x="383.1" y="695.5" width="48.8" height="54.2" rx="7" fill="url(#gb)"/>
<text x="399.5" y="733.0" font-size="30" font-family="Liberation Sans, sans-serif" text-anchor="start" fill="#fff" stroke="#fff" stroke-width="0.5" filter="url(#shg)">&gt;</text>
<text x="315.6" y="741.0" font-size="55" font-family="Liberation Sans, sans-serif" text-anchor="start" fill="#dce28c" textLength="52.5" lengthAdjust="spacingAndGlyphs" >10</text>
<text x="319.8" y="774.0" font-size="25" font-family="Liberation Sans, sans-serif" text-anchor="start" fill="#dce28c" textLength="47.0" lengthAdjust="spacingAndGlyphs" >step</text>
<rect x="211.5" y="799.5" width="85.0" height="52.5" rx="7" fill="url(#gr)"/>
<text x="224.4" y="838.2" font-size="36" font-family="Liberation Sans, sans-serif" text-anchor="start" fill="#fff" textLength="64.6" lengthAdjust="spacingAndGlyphs" stroke="#fff" stroke-width="0.5" filter="url(#shr)">Free</text>
<rect x="304.0" y="799.5" width="76.6" height="52.5" rx="7" fill="url(#gr)"/>
<text x="318.0" y="838.2" font-size="36" font-family="Liberation Sans, sans-serif" text-anchor="start" fill="#fff" textLength="52.0" lengthAdjust="spacingAndGlyphs" stroke="#fff" stroke-width="0.5" filter="url(#shr)">Rec</text>
<rect x="387.0" y="799.5" width="67.4" height="52.5" rx="7" fill="url(#gb)"/>
<rect x="411.3" y="810" width="6.2" height="39" rx="1.5" fill="#c6c6c6"/><rect x="429" y="810" width="6.2" height="39" rx="1.5" fill="#c6c6c6"/>
<rect x="470.3" y="799.5" width="48.3" height="52.5" rx="7" fill="url(#gb)"/>
<text x="487.0" y="837.8" font-size="30" font-family="Liberation Sans, sans-serif" text-anchor="start" fill="#fff" stroke="#fff" stroke-width="0.5" filter="url(#shg)">&lt;</text>
<rect x="594.5" y="799.5" width="48.3" height="52.5" rx="7" fill="url(#gb)"/>
<text x="610.0" y="837.8" font-size="30" font-family="Liberation Sans, sans-serif" text-anchor="start" fill="#fff" stroke="#fff" stroke-width="0.5" filter="url(#shg)">&gt;</text>
<text x="530.8" y="844.5" font-size="36" font-family="Liberation Sans, sans-serif" text-anchor="start" fill="#dce28c" textLength="51.5" lengthAdjust="spacingAndGlyphs" >001</text>
<text x="532.3" y="877.0" font-size="24.5" font-family="Liberation Sans, sans-serif" text-anchor="start" fill="#dce28c" textLength="51.0" lengthAdjust="spacingAndGlyphs" >Start</text>
<rect x="687.3" y="799.5" width="48.3" height="52.5" rx="7" fill="url(#gb)"/>
<text x="704.0" y="837.8" font-size="30" font-family="Liberation Sans, sans-serif" text-anchor="start" fill="#fff" stroke="#fff" stroke-width="0.5" filter="url(#shg)">&lt;</text>
<rect x="842.5" y="799.5" width="48.9" height="52.5" rx="7" fill="url(#gb)"/>
<text x="858.5" y="837.8" font-size="30" font-family="Liberation Sans, sans-serif" text-anchor="start" fill="#fff" stroke="#fff" stroke-width="0.5" filter="url(#shg)">&gt;</text>
<text x="750.8" y="845.5" font-size="54" font-family="Liberation Sans, sans-serif" text-anchor="start" fill="#dce28c" textLength="77.0" lengthAdjust="spacingAndGlyphs" >001</text>
<text x="750.8" y="877.0" font-size="24.5" font-family="Liberation Sans, sans-serif" text-anchor="start" fill="#dce28c" textLength="85.5" lengthAdjust="spacingAndGlyphs" >Current</text>
<rect x="931.6" y="799.5" width="48.4" height="52.5" rx="7" fill="url(#gb)"/>
<text x="948.5" y="837.8" font-size="30" font-family="Liberation Sans, sans-serif" text-anchor="start" fill="#fff" stroke="#fff" stroke-width="0.5" filter="url(#shg)">&lt;</text>
<rect x="1055.9" y="799.5" width="48.3" height="52.5" rx="7" fill="url(#gb)"/>
<text x="1071.5" y="837.8" font-size="30" font-family="Liberation Sans, sans-serif" text-anchor="start" fill="#fff" stroke="#fff" stroke-width="0.5" filter="url(#shg)">&gt;</text>
<text x="991.6" y="844.5" font-size="36" font-family="Liberation Sans, sans-serif" text-anchor="start" fill="#dce28c" textLength="51.5" lengthAdjust="spacingAndGlyphs" >001</text>
<text x="1000.8" y="877.0" font-size="24.5" font-family="Liberation Sans, sans-serif" text-anchor="start" fill="#dce28c" textLength="40.0" lengthAdjust="spacingAndGlyphs" >End</text>
<rect x="1134" y="494.0" width="159.5" height="22.3" fill="#0020f8"/>
<rect x="1134" y="515.9" width="159.5" height="24.9" fill="#0000d8"/>
<rect x="1134" y="540.4" width="159.5" height="24.0" fill="#0048f8"/>
<rect x="1134" y="564.0" width="159.5" height="24.0" fill="#0068f8"/>
<rect x="1134" y="587.6" width="159.5" height="26.9" fill="#00f840"/>
<rect x="1134" y="614.1" width="159.5" height="20.3" fill="#0000a0"/>
<rect x="1132.5" y="492.5" width="162.5" height="143" fill="none" stroke="#d09898" stroke-width="3.4"/>
<rect x="1134" y="712.0" width="159.5" height="20.9" fill="#00f8b0"/>
<rect x="1134" y="732.5" width="159.5" height="25.4" fill="#f81000"/>
<rect x="1134" y="757.5" width="159.5" height="24.7" fill="#ffe000"/>
<rect x="1134" y="781.8" width="159.5" height="23.3" fill="#90ff00"/>
<rect x="1134" y="804.7" width="159.5" height="27.3" fill="#00f8d8"/>
<rect x="1134" y="831.6" width="159.5" height="19.8" fill="#0000a0"/>
<rect x="1132.5" y="710.5" width="162.5" height="142" fill="none" stroke="#d09898" stroke-width="3.4"/>
<rect x="1152.7" y="648.0" width="49.5" height="54.3" rx="7" fill="url(#gb)"/>
<text x="1167.0" y="691.0" font-size="42" font-family="Liberation Sans, sans-serif" text-anchor="start" fill="#fff" stroke="#fff" stroke-width="0.5" filter="url(#shg)">^</text>
<rect x="1235.0" y="648.0" width="49.7" height="54.3" rx="7" fill="url(#gb)"/>
<text x="1250.0" y="687.6" font-size="36" font-family="Liberation Sans, sans-serif" text-anchor="start" fill="#fff" textLength="21.0" lengthAdjust="spacingAndGlyphs" stroke="#fff" stroke-width="0.5" filter="url(#shg)">X</text>
<rect x="1531.6" y="172.6" width="34.2" height="34.6" rx="2" fill="#999"/>
<circle cx="1548" cy="450.4" r="16" fill="#999"/>
<path d="M1529.5,710 L1563,691 L1563,729 Z" fill="#999"/>
</svg></body></html>
